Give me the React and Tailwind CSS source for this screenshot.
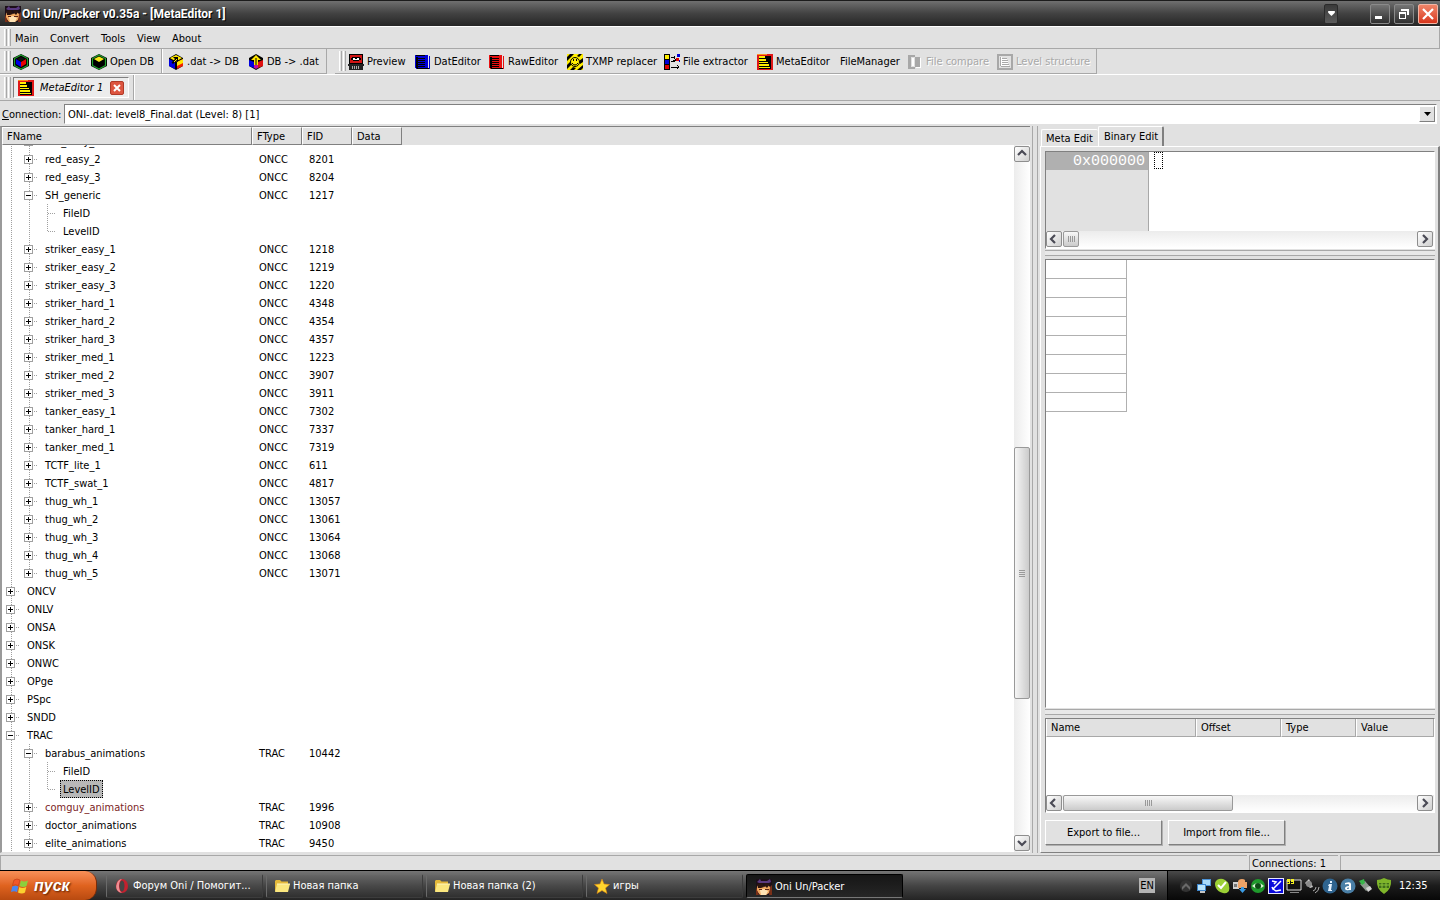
import React from 'react';
import clsx from 'clsx';

/* ---------- icons ---------- */

const Pic = ({ size = 'size-4', box = 16, children }) => (
    <svg className={clsx(size, 'shrink-0')} viewBox={`0 0 ${box} ${box}`} aria-hidden="true">
        {children}
    </svg>
);

const FaceIcon = () => (
    <Pic>
        <path d="M0 0h16v16H0z" fill="#1c0f18" />
        <path d="M1 3l3-3 1 2 6 0 3-2 1 3-2 1-10 0z" fill="#5a3a80" />
        <path d="M1 7l4-2 3 3 4-2 3 3-2 5-3 2H4l-3-4z" fill="#f0a860" />
        <path d="M4 11l4-1 4 2-2 4H5z" fill="#ffe3b4" />
        <path d="M1 5l5-1 2 4-3 1-3 0zM8 4l6 1-3 4-2-2z" fill="#2a1410" />
        <path d="M3 10h3v1H3zM9 10h4v1H9z" fill="#5a2415" />
        <path d="M0 8l1 3 2 5H0zM14 8l2-2v10h-3z" fill="#7a3018" />
    </Pic>
);

const HEX = 'M8 0l7 4v8l-7 4-7-4V4z';

const OpenDatIcon = () => (
    <Pic>
        <path d="M8 0l8 4v8l-8 4-8-4V4z" fill="#000" />
        <path d="M8 1l6.500 3.500v7L8 15l-6.500-3.500v-7z" fill="none" stroke="#1fa32c" strokeWidth="1.200" />
        <path d="M8 3l4 2-4 2-4-2z" fill="#111" />
        <path d="M3 5l5 3v5l-5-3z" fill="#0000e8" />
        <path d="M13 5L8 8v5l5-3z" fill="#e80000" />
    </Pic>
);

const OpenDbIcon = () => (
    <Pic>
        <path d="M8 0l8 4v8l-8 4-8-4V4z" fill="#000" />
        <path d="M8 1l6.500 3.500v7L8 15l-6.500-3.500v-7z" fill="none" stroke="#1fa32c" strokeWidth="1.200" />
        <path d="M8 2.500L13 5 8 8 3 5z" fill="#f4ea1a" />
    </Pic>
);

const DatToDbIcon = () => (
    <Pic>
        <path d={HEX} fill="#000" />
        <path d="M8 1l6 3-6 3.500L2 4z" fill="#ffe600" />
        <path d="M1 5l6 3v7l-6-3z" fill="#0000e0" />
        <path d="M15 5L9 8v7l6-3z" fill="#f02000" />
        <path d="M9 8l6-3v4l-6 3z" fill="#ffe600" />
        <path d="M5 3h5v5L8.500 6.500 5 10 3.500 8.500 7 5z" fill="#000" />
        <path d="M6 8l3-3" stroke="#ffe600" />
    </Pic>
);

const DbToDatIcon = () => (
    <Pic>
        <path d={HEX} fill="#000" />
        <path d="M1 6l5 2v6l-5-2z" fill="#0000e0" />
        <path d="M15 6l-5 2v6l5-2z" fill="#e01010" />
        <path d="M8 1l5 5h-3v5H6V6H3z" fill="#ffe600" />
        <path d="M8 4v7" stroke="#000" />
        <path d="M6 11h4v3l-2 1-2-1z" fill="#c010a0" />
    </Pic>
);

const PreviewIcon = () => (
    <Pic>
        <g shapeRendering="crispEdges">
            <path d="M1 0h14v10H1z" fill="#000" />
            <path d="M2 1h12v8H2z" fill="#d01414" />
            <path d="M4 3h8v1H4zM3 4h2v2H3zM11 4h2v2h-2zM5 6h6v1H5z" fill="#000" />
            <path d="M5 4h6v2H5z" fill="#fff" />
            <path d="M7 4h2v1H7z" fill="#000" />
            <path d="M0 10h16v2h-1v4H1v-4H0z" fill="#222" />
            <path d="M4 12h1v3H4zM6 12h1v3H6zM8 12h1v3H8zM10 12h1v3h-1z" fill="#aaa" />
        </g>
    </Pic>
);

const BookIcon = ({ color }) => (
    <Pic>
        <g shapeRendering="crispEdges">
            <path d="M0 1h13v14H1v-1H0z" fill={color} />
            <path d="M14 2h1v13h-1z" fill={color} />
            <path d="M1 1h9v1H1zM1 4h9v1H1zM3 6h7v1H3zM1 8h9v1H1zM3 10h7v1H3zM1 12h9v1H1zM2 14h12v1H2zM1 3h2v11H1z" fill="#000" />
        </g>
    </Pic>
);

const TxmpIcon = () => (
    <Pic>
        <path d="M0 0h16v16H0z" fill="#ffee00" />
        <path d="M3 0h4L0 7V3zM12 0h3l-3 3-2-1zM16 4v4l-3 2-1-3zM0 11l4-4 1 3-5 5zM6 13l3 1-2 2H3zM16 11v3l-2 2h-4z" fill="#000" />
        <circle cx="8" cy="8" r="4.500" fill="#ffee00" stroke="#000" />
        <path d="M6 5h1v2H6zM9 5h1v2H9z" fill="#000" />
        <path d="M5 9q3 4 6 0" fill="none" stroke="#000" />
    </Pic>
);

const ExtractorIcon = () => (
    <Pic>
        <g shapeRendering="crispEdges">
            <path d="M0 0h6v16H0z" fill="#000" />
            <path d="M1 1h4v4H1z" fill="#ffee00" />
            <path d="M1 6h4v4H1z" fill="#0000d8" />
            <path d="M1 11h4v4H1z" fill="#e00000" />
            <path d="M7 3h4v1H7zM10 2h1v3h-1zM7 7h2v-1h2V5h1v2h-1v1H7zM7 13h8v1H7zM13 11h1v1h-1zM14 12h1v1h-1zM13 15h1v-1h-1z" fill="#000" />
            <path d="M13 0h3v3h-3z" fill="#0000d8" />
            <path d="M12 4h3v3h-3z" fill="#e00000" />
            <path d="M15 6h1v2h-1z" fill="#0000d8" />
        </g>
    </Pic>
);

const MetaIcon = () => (
    <Pic>
        <g shapeRendering="crispEdges">
            <path d="M0 0h16v16H0z" fill="#e01818" />
            <path d="M0 0h10v1H0z" fill="#ff9020" />
            <path d="M2 2h12v13H2z" fill="#000" />
            <path d="M2 2h6v2H2zM2 5h7v2H2zM2 8h9v1H2zM2 10h10v2H2zM2 13h11v1H2z" fill="#ffee00" />
        </g>
    </Pic>
);

const CompareIcon = () => (
    <Pic>
        <g shapeRendering="crispEdges">
            <path d="M1 1h7v2H4v10h4v2H1z" fill="#a8a8a8" />
            <path d="M8 3h5v10H8z" fill="#a8a8a8" />
            <path d="M5 4h2v8H5zM13 4h1v10H9v-1h4z" fill="#fff" />
        </g>
    </Pic>
);

const LevelIcon = () => (
    <Pic>
        <g shapeRendering="crispEdges">
            <path d="M0 0h16v16H0z" fill="#a8a8a8" />
            <path d="M2 2h12v12H2z" fill="#e1e1e1" />
            <path d="M3 3h1v9H3zM5 4h5v1H5zM5 6h6v1H5zM5 8h6v1H5zM5 10h7v1H5zM4 12h9v1H4z" fill="#a8a8a8" />
            <path d="M4 3h1v9H4zM5 5h5v1H5zM5 7h6v1H5zM5 9h6v1H5zM5 11h7v1H5z" fill="#fff" />
        </g>
    </Pic>
);

const FlagIcon = () => (
    <Pic size="size-5" box={20}>
        <path d="M4 4q3-2 6 0L8.500 9.500Q5.500 8 2.500 9.500z" fill="#f0582a" stroke="#b03510" strokeWidth=".5" />
        <path d="M11 4.500q3 2 7 0L16.500 10q-3 2-7 0z" fill="#8cd03c" />
        <path d="M2.300 10.500q3-1.500 6 0L7 16q-3-1.500-6 0z" fill="#4a86f0" />
        <path d="M9.300 11q3 2 7 0L15 16.500q-3 2-7 0z" fill="#fbd22f" />
    </Pic>
);

const OperaIcon = () => (
    <Pic>
        <ellipse cx="8" cy="8" rx="6" ry="7" fill="#c4202e" />
        <ellipse cx="8" cy="8" rx="2.500" ry="5.500" fill="#454545" />
        <path d="M4 3q2-2 4-2-3 2-3 7t3 7q-3 0-5-3-2-4 1-9z" fill="#ef8f94" />
    </Pic>
);

const FolderIcon = () => (
    <Pic>
        <path d="M1 3l1-1h4l1.500 1.500H14V13H1z" fill="#e5b93a" />
        <path d="M3 6h13l-2 8H1z" fill="#fbe77f" />
        <path d="M3 6h13" stroke="#fff6c0" />
    </Pic>
);

const StarIcon = () => (
    <Pic>
        <path d="M8 1l2 5 5.500.500L11.500 10l1.500 5.500L8 12.500 3 15.500 4.500 10 .5 6.500 6 6z" fill="#ffd52e" stroke="#e08a10" strokeWidth=".6" />
    </Pic>
);

const trayIcons = [
    ['Show hidden icons', (
        <>
            <circle cx="8" cy="8" r="6" fill="#333" />
            <path d="M4 9l4-4 4 4v3L8 8l-4 4z" fill="#6a6a6a" />
        </>
    )],
    ['Network', (
        <>
            <path d="M6 1h9v7H6z" fill="#4c93d8" />
            <path d="M7 2h7v5H7z" fill="#a9daf8" />
            <path d="M1 6h9v7H1z" fill="#3e86cc" />
            <path d="M2 7h7v5H2z" fill="#b9e4fb" />
            <path d="M4 13h5v2H4z" fill="#c5c5c5" />
        </>
    )],
    ['Skype', (
        <>
            <path d="M5 1q3-1 6 1 4 2 4 6 1 4-1 6-2 2-5 1-5-1-7-5Q-1 3 5 1z" fill="#9bd035" />
            <path d="M4 7l3 3 5-6" fill="none" stroke="#fff" strokeWidth="2" />
        </>
    )],
    ['Updates', (
        <>
            <path d="M1 4h6v7H1z" fill="#d0d0d0" />
            <path d="M2 6h3v3H2z" fill="#777" />
            <path d="M6 4q0-3 4-3t3 3h2v6H6z" fill="#eda368" />
            <path d="M9 9h3v2h2l-3.500 4L7 11h2z" fill="#3b9ce4" />
        </>
    )],
    ['Eye', (
        <>
            <circle cx="8" cy="8" r="7" fill="#1f9a2c" />
            <path d="M2 8q6-6 12 0-6 5-12 0z" fill="#d9f6d4" />
            <circle cx="8" cy="8" r="3" fill="#0c4a14" />
        </>
    )],
    ['Tablet', (
        <>
            <path d="M0 0h16v16H0z" fill="#e8e8ff" />
            <path d="M1 1h14v14H1z" fill="#0a0adc" />
            <path d="M4 3l4 1-2 2M13 3L5 11l-1-2M5 11l3 2 5-1" fill="none" stroke="#fff" strokeWidth="1.500" />
        </>
    )],
    ['Monitor', (
        <>
            <path d="M1 2h14v10H1z" fill="#111" stroke="#ddd" />
            <path d="M4 14h9v1H4z" fill="#888" />
            <path d="M1 1h3v5H1V5h2V4H1zM5 1h3v5H5V5h2V4H5z" fill="#f5f020" />
        </>
    )],
    ['Volume', (
        <>
            <path d="M1 5l4-4 4 8-3 1z" fill="#c8c8c8" />
            <circle cx="5" cy="6" r="3" fill="#8b8b8b" />
            <path d="M9 13q3-1 3-4M11 15q4-2 4-6" fill="none" stroke="#b0b0b0" />
        </>
    )],
    ['Info', (
        <>
            <circle cx="8" cy="8" r="7.500" fill="#2f648f" />
            <path d="M8 3h2v2H8zM7 6h3l-1 6h1v1H6l1-5H6z" fill="#e6f3ff" />
        </>
    )],
    ['Antivirus', (
        <>
            <circle cx="8" cy="8" r="7.500" fill="#4a7fa6" />
            <path d="M5 5q6-2 6 1v6H9q-4 1-4-1.500Q5 8 9 8V6.500Q8 5.500 5 6.500zM9 9.500Q7 9.500 7 10.500t2 0z" fill="#fff" />
        </>
    )],
    ['Safely remove hardware', (
        <>
            <path d="M2 6l5-3 6 7-5 3z" fill="#8e9a90" />
            <path d="M1 3l5-2 1 4-3 2z" fill="#39b54a" />
            <path d="M8 10l4-2 2 3-4 3z" fill="#d5d5d5" />
        </>
    )],
    ['Shield', (
        <>
            <path d="M8 0q4 2 7 2 1 9-7 14Q0 11 1 2q3 0 7-2z" fill="#7fb52a" />
            <path d="M3 5h10v5H3z" fill="#3f6d18" />
            <path d="M3 7h10M6 5v5M10 5v5" stroke="#8cc43a" />
        </>
    )],
];

/* ---------- small controls ---------- */

const Grip = () => (
    <div className="flex shrink-0 gap-px self-stretch py-0.5 pl-1 pr-0.5">
        <span className="w-[3px] border-l border-r border-l-white border-r-[#a8a8a8]" />
        <span className="w-[3px] border-l border-r border-l-white border-r-[#a8a8a8]" />
    </div>
);

const ARROWS = {
    up: 'M4 9l4-4 4 4',
    down: 'M4 6l4 4 4-4',
    left: 'M9 4L5 8l4 4',
    right: 'M6 4l4 4-4 4',
};

const ScrollButton = ({ dir }) => (
    <button
        type="button"
        aria-label={`Scroll ${dir}`}
        className="flex size-4 shrink-0 items-center justify-center rounded-xs border border-[#8e8e8e] bg-linear-to-br from-white to-[#cfcfcf]"
    >
        <svg className="size-3.5 shrink-0" viewBox="1 1 14 14">
            <path d={ARROWS[dir]} fill="none" stroke="#4a4a55" strokeWidth="2.200" />
        </svg>
    </button>
);

const VScroll = () => (
    <div className="flex w-4 shrink-0 flex-col bg-linear-to-r from-[#ececec] to-white py-px">
        <ScrollButton dir="up" />
        <div className="grow-[286] basis-0" />
        <div className="flex grow-[251] basis-0 flex-col items-center justify-center gap-px rounded-xs border border-[#999] bg-linear-to-r from-[#f6f6f6] to-[#cbcbcb]">
            {[0, 1, 2, 3].map((i) => (
                <span key={i} className="h-px w-1.5 bg-[#999]" />
            ))}
        </div>
        <div className="grow-[136] basis-0" />
        <ScrollButton dir="down" />
    </div>
);

const HScroll = ({ thumb }) => (
    <div className="flex h-[17px] shrink-0 items-start gap-px bg-linear-to-b from-[#ececec] to-white pr-px">
        <ScrollButton dir="left" />
        <div className={clsx('flex h-4 items-center justify-center gap-px rounded-xs border border-[#999] bg-linear-to-b from-[#f8f8f8] to-[#cbcbcb]', thumb)}>
            {[0, 1, 2, 3].map((i) => (
                <span key={i} className="h-1.5 w-px bg-[#999]" />
            ))}
        </div>
        <div className="flex-1" />
        <ScrollButton dir="right" />
    </div>
);

const Splitter = () => (
    <div className="h-2.5 shrink-0 pt-px">
        <div className="h-1.5 border-y border-[#a8a8a8] bg-[#e8e8e8]" />
    </div>
);

const ToolButton = ({ icon, label, width, disabled }) => (
    <button
        type="button"
        disabled={disabled}
        className={clsx('flex shrink-0 items-center gap-[3px] whitespace-nowrap', width, disabled && 'text-[#a8a8a8] [text-shadow:1px_1px_#fff]')}
    >
        {icon}
        {label}
    </button>
);

/* ---------- window chrome ---------- */

const TitleBar = () => (
    <header className="flex h-[26px] shrink-0 items-center border-t border-[#1c1c1c] bg-linear-to-b from-[#707070] via-[#424242] to-[#262626] pl-[5px] pr-0.5">
        <FaceIcon />
        <h1 className="flex-1 truncate pl-px font-['Roboto',sans-serif] text-xs font-bold text-white [text-shadow:1px_1px_#000]">
            Oni Un/Packer v0.35a - [MetaEditor 1]
        </h1>
        <button type="button" aria-label="Roll up" className="mr-8 flex h-5 w-3.5 justify-center rounded-xs border border-[#2b2b2b] bg-linear-to-b from-[#3a3a3a] to-[#5c5c5c] pt-1.5">
            <svg className="h-[5px] w-[7px]" viewBox="0 0 8 6">
                <path d="M0 0h8v2L4 6 0 2z" fill="#fff" />
            </svg>
        </button>
        <div className="flex gap-1">
            <button type="button" aria-label="Minimize" className="flex size-5 items-end rounded-xs border border-[#8a8a8a] bg-linear-to-b from-[#757575] to-[#303030] pb-1 pl-1">
                <span className="h-[3px] w-[7px] bg-white" />
            </button>
            <button type="button" aria-label="Restore" className="flex size-5 items-center justify-center rounded-xs border border-[#8a8a8a] bg-linear-to-b from-[#757575] to-[#303030]">
                <svg className="size-3" viewBox="0 0 12 12" shapeRendering="crispEdges">
                    <path d="M3 1h8v6H9V3H3z" fill="#fff" />
                    <path d="M1 4h7v7H1zM2 6v4h5V6z" fill="#fff" fillRule="evenodd" />
                </svg>
            </button>
            <button type="button" aria-label="Close" className="flex size-5 items-center justify-center rounded-xs border border-[#f3b5a5] bg-linear-to-b from-[#f08468] to-[#d8341a]">
                <svg className="size-3" viewBox="0 0 12 12">
                    <path d="M1 1l10 10M11 1L1 11" stroke="#fff" strokeWidth="2.200" />
                </svg>
            </button>
        </div>
    </header>
);

const menus = [
    ['Main', 'w-[35px]'],
    ['Convert', 'w-[51px]'],
    ['Tools', 'w-9'],
    ['View', 'w-[35px]'],
    ['About', 'w-10'],
];

const MenuBar = () => (
    <nav className="flex h-[23px] shrink-0 items-center border-b border-r border-t border-b-[#a8a8a8] border-r-[#a8a8a8] border-t-white">
        <Grip />
        <div className="flex pl-0.5 pt-0.5">
            {menus.map(([label, width]) => (
                <button key={label} type="button" className={clsx('shrink-0 text-left', width)}>
                    {label}
                </button>
            ))}
        </div>
    </nav>
);

const ToolBar = () => (
    <div className="flex h-[26px] shrink-0 items-stretch border-b border-b-white">
        <div className="flex border-b border-r border-[#a8a8a8]">
            <Grip />
            <div className="flex items-center pt-0.5">
                <ToolButton icon={<OpenDatIcon />} label="Open .dat" width="w-[78px]" />
                <ToolButton icon={<OpenDbIcon />} label="Open DB" width="w-[70px]" />
            </div>
            <div className="mr-[5px] w-0.5 border-l border-r border-l-[#a8a8a8] border-r-white" />
            <div className="flex items-center pt-0.5">
                <ToolButton icon={<DatToDbIcon />} label=".dat -> DB" width="w-20" />
                <ToolButton icon={<DbToDatIcon />} label="DB -> .dat" width="w-[78px]" />
            </div>
        </div>
        <div className="ml-2 flex border-b border-r border-[#a8a8a8]">
            <Grip />
            <div className="flex items-center pt-0.5">
                <ToolButton icon={<PreviewIcon />} label="Preview" width="w-[67px]" />
                <ToolButton icon={<BookIcon color="#0000d8" />} label="DatEditor" width="w-[74px]" />
                <ToolButton icon={<BookIcon color="#e81010" />} label="RawEditor" width="w-[78px]" />
                <ToolButton icon={<TxmpIcon />} label="TXMP replacer" width="w-[97px]" />
                <ToolButton icon={<ExtractorIcon />} label="File extractor" width="w-[93px]" />
                <ToolButton icon={<MetaIcon />} label="MetaEditor" width="w-[83px]" />
                <ToolButton label="FileManager" width="w-[67px]" />
                <ToolButton icon={<CompareIcon />} label="File compare" width="w-[90px]" disabled />
                <ToolButton icon={<LevelIcon />} label="Level structure" width="w-[99px]" disabled />
            </div>
        </div>
    </div>
);

const WindowTabs = () => (
    <div className="flex h-[26px] shrink-0 items-stretch border-b border-[#a8a8a8]">
        <Grip />
        <div className="my-0.5 flex items-center border border-b-white border-l-[#808080] border-r-white border-t-[#808080] bg-[#ececec] pl-1 pr-1">
            <MetaIcon />
            <button type="button" className="w-[76px] shrink-0 whitespace-nowrap pl-1.5 text-left italic">MetaEditor 1</button>
            <button type="button" aria-label="Close MetaEditor 1" className="flex size-3.5 items-center justify-center rounded-xs border border-[#b03a28] bg-[#dd5540]">
                <svg className="size-2" viewBox="0 0 8 8">
                    <path d="M1 1l6 6M7 1L1 7" stroke="#fff" strokeWidth="2" />
                </svg>
            </button>
        </div>
        <div className="ml-1 w-0.5 border-l border-r border-l-[#a8a8a8] border-r-white" />
    </div>
);

const ConnectionRow = () => (
    <div className="flex h-[25px] shrink-0 items-center pl-0.5 pr-[3px] pt-px">
        <label htmlFor="connection" className="w-[62px] shrink-0 pt-px">
            <span className="underline">C</span>onnection:
        </label>
        <div className="relative flex-1">
            <select
                id="connection"
                className="block h-5 w-full appearance-none border border-b-white border-l-[#808080] border-r-white border-t-[#808080] bg-white pl-[3px] pt-0.5 outline-none"
            >
                <option>ONI-.dat: level8_Final.dat (Level: 8) [1]</option>
            </select>
            <span className="pointer-events-none absolute inset-y-0.5 right-0.5 flex w-4 items-center justify-center border border-b-[#808080] border-l-white border-r-[#808080] border-t-white bg-[#e1e1e1]">
                <svg className="h-1 w-[7px]" viewBox="0 0 7 4">
                    <path d="M0 0h7L3.500 4z" fill="#000" />
                </svg>
            </span>
        </div>
    </div>
);

/* ---------- file tree ---------- */

// [level, name, type, id, state, mark]
const rows = [
    [2, 'red_easy_2', 'ONCC', '8201', '+'],
    [2, 'red_easy_3', 'ONCC', '8204', '+'],
    [2, 'SH_generic', 'ONCC', '1217', '-'],
    [3, 'FileID'],
    [3, 'LevelID', '', '', 'last'],
    [2, 'striker_easy_1', 'ONCC', '1218', '+'],
    [2, 'striker_easy_2', 'ONCC', '1219', '+'],
    [2, 'striker_easy_3', 'ONCC', '1220', '+'],
    [2, 'striker_hard_1', 'ONCC', '4348', '+'],
    [2, 'striker_hard_2', 'ONCC', '4354', '+'],
    [2, 'striker_hard_3', 'ONCC', '4357', '+'],
    [2, 'striker_med_1', 'ONCC', '1223', '+'],
    [2, 'striker_med_2', 'ONCC', '3907', '+'],
    [2, 'striker_med_3', 'ONCC', '3911', '+'],
    [2, 'tanker_easy_1', 'ONCC', '7302', '+'],
    [2, 'tanker_hard_1', 'ONCC', '7337', '+'],
    [2, 'tanker_med_1', 'ONCC', '7319', '+'],
    [2, 'TCTF_lite_1', 'ONCC', '611', '+'],
    [2, 'TCTF_swat_1', 'ONCC', '4817', '+'],
    [2, 'thug_wh_1', 'ONCC', '13057', '+'],
    [2, 'thug_wh_2', 'ONCC', '13061', '+'],
    [2, 'thug_wh_3', 'ONCC', '13064', '+'],
    [2, 'thug_wh_4', 'ONCC', '13068', '+'],
    [2, 'thug_wh_5', 'ONCC', '13071', '+', 'end'],
    [1, 'ONCV', '', '', '+'],
    [1, 'ONLV', '', '', '+'],
    [1, 'ONSA', '', '', '+'],
    [1, 'ONSK', '', '', '+'],
    [1, 'ONWC', '', '', '+'],
    [1, 'OPge', '', '', '+'],
    [1, 'PSpc', '', '', '+'],
    [1, 'SNDD', '', '', '+'],
    [1, 'TRAC', '', '', '-'],
    [2, 'barabus_animations', 'TRAC', '10442', '-'],
    [3, 'FileID'],
    [3, 'LevelID', '', '', 'last', 'selected'],
    [2, 'comguy_animations', 'TRAC', '1996', '+', 'changed'],
    [2, 'doctor_animations', 'TRAC', '10908', '+'],
    [2, 'elite_animations', 'TRAC', '9450', '+'],
];

const Guide = ({ branch, state, end }) => (
    <svg className="size-[18px] shrink-0" viewBox="0 0 18 18" shapeRendering="crispEdges" aria-hidden="true">
        <path d={end ? 'M9.500 0v9' : 'M9.500 0v18'} stroke="#a0a0a0" strokeDasharray="1 1" />
        {branch && <path d="M10 9.500h8" stroke="#a0a0a0" strokeDasharray="1 1" />}
        {(state === '+' || state === '-') && (
            <>
                <path d="M4.500 5.500h8v8h-8z" fill="#fff" stroke="#a0a0a0" />
                <path d={state === '+' ? 'M6 9.500h5M8.500 7v5' : 'M6 9.500h5'} stroke="#000" />
            </>
        )}
    </svg>
);

const NameCell = ({ level, name, state, mark }) => (
    <div className="flex h-[18px] items-center">
        {Array.from({ length: level }, (_, i) => (
            <Guide
                key={i}
                branch={i === level - 1}
                state={i === level - 1 ? state : undefined}
                end={i === level - 1 && (state === 'last' || mark === 'end')}
            />
        ))}
        <span
            className={clsx(
                'ml-1 border px-0.5 pt-0.5 leading-[14px]',
                mark === 'selected' ? 'border-dotted border-black bg-[#b8b8b8]' : 'border-transparent',
                mark === 'changed' && 'text-[#7b2525]',
            )}
        >
            {name}
        </span>
    </div>
);

const headCell = 'border border-b-[#808080] border-l-white border-r-[#808080] border-t-white pb-0 pl-1 pt-0.5 text-left font-normal';

const FileTree = () => (
    <section className="flex min-w-0 flex-1 flex-col overflow-hidden border-l-2 border-t border-b border-b-[#e1e1e1] border-l-[#9a9a9a] border-t-[#808080] bg-white">
        <div className="flex min-h-0 flex-1">
            <div className="min-w-0 flex-1 overflow-hidden">
                <table className="w-full table-fixed border-separate border-spacing-0">
                    <colgroup>
                        <col className="w-[250px]" />
                        <col className="w-[50px]" />
                        <col className="w-[50px]" />
                        <col className="w-[50px]" />
                        <col />
                    </colgroup>
                    <thead>
                        <tr className="h-[18px] bg-[#e1e1e1]">
                            <th className={headCell}>FName</th>
                            <th className={headCell}>FType</th>
                            <th className={headCell}>FID</th>
                            <th className={headCell}>Data</th>
                            <td />
                        </tr>
                    </thead>
                    <tbody>
                        {/* row scrolled half out under the header */}
                        <tr>
                            <td className="p-0">
                                <div className="flex h-[5px] flex-col justify-end overflow-hidden">
                                    <NameCell level={2} name="red_easy_1" state="+" />
                                </div>
                            </td>
                        </tr>
                        {rows.map(([level, name, type, id, state, mark], i) => (
                            <tr key={i} className="h-[18px]">
                                <td className="p-0">
                                    <NameCell level={level} name={name} state={state} mark={mark} />
                                </td>
                                <td className="p-0 pl-[7px] pt-0.5">{type}</td>
                                <td className="p-0 pl-[7px] pt-0.5">{id}</td>
                                <td />
                                <td />
                            </tr>
                        ))}
                    </tbody>
                </table>
            </div>
            <div className="flex flex-col">
                <div className="h-[18px] shrink-0 bg-[#e1e1e1]" />
                <div className="flex flex-1">
                    <VScroll />
                </div>
            </div>
        </div>
    </section>
);

/* ---------- right side ---------- */

const sunken = 'border border-b-white border-l-[#808080] border-r-white border-t-[#808080]';
const raised = 'border border-b-[#808080] border-l-white border-r-[#808080] border-t-white';

const HexView = () => (
    <div className={clsx('flex h-[98px] shrink-0 flex-col bg-white', sunken)}>
        <div className="flex min-h-0 flex-1">
            <div className="w-[103px] shrink-0 border-r border-[#a8a8a8] bg-[#e1e1e1]">
                <div className="h-[18px] bg-[#b0b0b0] pr-[3px] text-right font-['Liberation_Mono',monospace] text-[15px] leading-5 text-white">
                    0x000000
                </div>
            </div>
            <div className="pl-[5px]">
                <div className="h-[17px] w-[9px] border border-dotted border-black" />
            </div>
        </div>
        <HScroll thumb="w-4" />
    </div>
);

const ValueGrid = () => (
    <div className={clsx('min-h-0 flex-1 overflow-hidden bg-white', sunken)}>
        <table className="w-[81px] border-separate border-spacing-0">
            <tbody>
                {Array.from({ length: 8 }, (_, i) => (
                    <tr key={i} className="h-[19px]">
                        <td className="border-b border-r border-[#b0b0b0] p-0" />
                    </tr>
                ))}
            </tbody>
        </table>
    </div>
);

const listHead = 'border-b border-l border-b-[#a8a8a8] border-l-white border-r border-r-[#a8a8a8] pl-1 text-left font-normal';

const LinkList = () => (
    <div className={clsx('flex h-[95px] shrink-0 flex-col bg-white', sunken)}>
        <div className="flex-1">
            <table className="w-full table-fixed border-separate border-spacing-0">
                <colgroup>
                    <col className="w-[150px]" />
                    <col className="w-[85px]" />
                    <col className="w-[75px]" />
                    <col />
                </colgroup>
                <thead>
                    <tr className="h-[18px] bg-[#e1e1e1]">
                        <th className={listHead}>Name</th>
                        <th className={listHead}>Offset</th>
                        <th className={listHead}>Type</th>
                        <th className={listHead}>Value</th>
                    </tr>
                </thead>
            </table>
        </div>
        <HScroll thumb="w-[170px]" />
    </div>
);

const EditPane = () => (
    <section className="flex w-[400px] shrink-0 flex-col">
        <div className="flex h-5 items-end pl-px" role="tablist">
            <button type="button" role="tab" aria-selected="false" className="h-[17px] w-[57px] rounded-t-xs border-l border-t border-white pl-1 pt-px text-left">
                Meta Edit
            </button>
            <button type="button" role="tab" aria-selected="true" className="h-5 w-[66px] rounded-t-xs border-l border-r-2 border-t border-l-white border-r-[#808080] border-t-white pl-[5px] text-left">
                Binary Edit
            </button>
        </div>
        <div className="flex min-h-0 flex-1 flex-col border border-r-2 border-b-[#808080] border-l-white border-r-[#808080] border-t-white pb-[7px] pl-1 pr-[3px] pt-1">
            <HexView />
            <Splitter />
            <ValueGrid />
            <Splitter />
            <LinkList />
            <div className="flex gap-1.5 pt-[7px]">
                <button type="button" className={clsx('h-[25px] w-[117px] shadow-[1px_1px_#b0b0b0]', raised)}>Export to file...</button>
                <button type="button" className={clsx('h-[25px] w-[117px] shadow-[1px_1px_#b0b0b0]', raised)}>Import from file...</button>
            </div>
        </div>
    </section>
);

/* ---------- bottom ---------- */

const statusCell = 'border-l border-t border-[#a8a8a8]';

const StatusBar = () => (
    <footer className="flex h-[17px] shrink-0 gap-0.5 pt-0.5">
        <div className={clsx('flex-1', statusCell)} />
        <div className={clsx('w-[89px] pl-0.5 leading-4', statusCell)}>Connections: 1</div>
        <div className={clsx('w-[100px]', statusCell)} />
    </footer>
);

const tasks = [
    ['Форум Oni / Помогит...', <OperaIcon />],
    ['Новая папка', <FolderIcon />],
    ['Новая папка (2)', <FolderIcon />],
    ['игры', <StarIcon />],
    ['Oni Un/Packer', <FaceIcon />, true],
];

const TaskBar = () => (
    <div className="flex h-[30px] shrink-0 items-stretch border-t border-black bg-linear-to-b from-[#757575] via-[#454545] to-[#242424] text-white">
        <button
            type="button"
            className="flex w-[97px] items-center gap-1 rounded-r-xl border-r border-[#7a2c08] bg-linear-to-b from-[#f79058] via-[#e0631f] to-[#b84a10] pl-2.5 font-['Liberation_Sans',sans-serif] text-base font-bold italic text-white [text-shadow:1px_1px_2px_#5a2000]"
        >
            <FlagIcon />
            пуск
        </button>
        <div className="flex flex-1 gap-[3px] pb-0.5 pl-[9px] pt-[3px]">
            {tasks.map(([label, icon, active]) => (
                <button
                    key={label}
                    type="button"
                    className={clsx(
                        'flex w-[157px] min-w-0 items-center gap-[3px] rounded-xs border whitespace-nowrap',
                        active
                            ? 'border-black border-b-[#777] bg-linear-to-b from-[#161616] to-[#262626] pl-[9px] pt-0.5'
                            : 'border-[#3c3c3c] border-l-[#6a6a6a] border-t-[#6a6a6a] bg-linear-to-b from-[#666] via-[#484848] to-[#303030] pl-[7px]',
                    )}
                >
                    {icon}
                    {label}
                </button>
            ))}
        </div>
        <div className="flex items-center pr-3">
            <span className="bg-[#b4b4b4] px-px leading-[15px] text-black">EN</span>
        </div>
        <div className="flex items-center border-l border-black bg-linear-to-b from-[#4a4a4a] via-[#1c1c1c] to-[#080808] pl-2.5 pr-3">
            <div className="flex gap-0.5 pr-[7px]">
                {trayIcons.map(([label, art]) => (
                    <button key={label} type="button" aria-label={label}>
                        <Pic>{art}</Pic>
                    </button>
                ))}
            </div>
            <time className="w-[29px]">12:35</time>
        </div>
    </div>
);

const App = () => {
    return (
        <div className="flex h-screen flex-col overflow-hidden bg-[#e1e1e1] font-['DejaVu_Sans_Condensed','DejaVu_Sans',sans-serif] text-[11px] leading-[14px] text-black">
            <TitleBar />
            <MenuBar />
            <ToolBar />
            <WindowTabs />
            <ConnectionRow />
            <main className="flex min-h-0 flex-1">
                <FileTree />
                <div className="mx-0.5 w-1.5 shrink-0 border-x border-[#a8a8a8]" />
                <EditPane />
            </main>
            <StatusBar />
            <TaskBar />
        </div>
    );
};

export default App;
